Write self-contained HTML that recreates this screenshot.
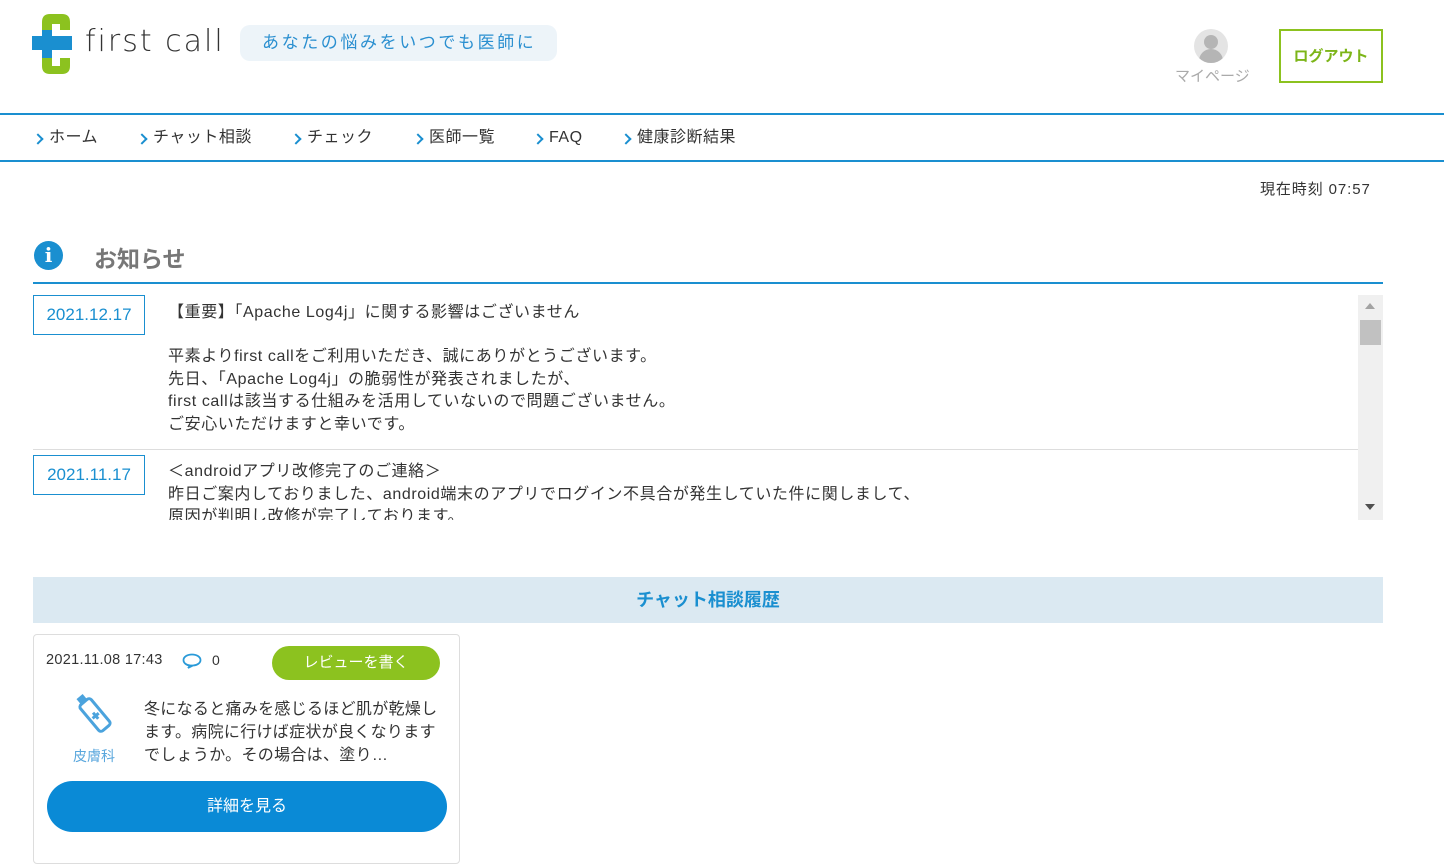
<!DOCTYPE html>
<html><head><meta charset="utf-8"><style>
*{margin:0;padding:0;box-sizing:border-box}
body{width:1444px;height:849px;overflow:hidden;background:#fff;font-family:"Liberation Sans","Noto Sans CJK JP",sans-serif;color:#333;position:relative}
.a{position:absolute}
.nav span{position:absolute;top:127px;height:22px;line-height:22px;font-size:16px;color:#333;white-space:nowrap;letter-spacing:.5px}
.nav span::before{content:"";position:absolute;left:-15px;top:8px;width:6px;height:6px;border-top:2px solid #1a8fd0;border-right:2px solid #1a8fd0;transform:rotate(45deg)}
.date{position:absolute;left:33px;width:112px;height:40px;border:1px solid #1a8fd0;color:#1a8fd0;font-size:17px;text-align:center;line-height:38px}
.txt{position:absolute;left:168px;font-size:16px;line-height:22.5px;color:#333;white-space:nowrap;letter-spacing:.6px}
</style></head><body>
<svg class="a" style="left:32px;top:14px" width="40" height="60" viewBox="0 0 40 60">
<path d="M10 8 Q10 0 18 0 L30 0 Q38 0 38 8 L38 16 L28 16 L28 10 L20 10 L20 52 L28 52 L28 44 L38 44 L38 52 Q38 60 30 60 L18 60 Q10 60 10 52Z" fill="#8cc21f"/>
<rect x="0" y="22" width="40" height="14" fill="#1a8fd0"/>
<rect x="10" y="16" width="10" height="28" fill="#1a8fd0"/>
</svg>
<div class="a" style="left:85px;top:24px;font-size:30px;color:#333;letter-spacing:2px;font-family:'DejaVu Sans',sans-serif;font-weight:300">first call</div>
<div class="a" style="left:240px;top:25px;width:317px;height:36px;background:#edf4f9;border-radius:10px;color:#2a8fd0;font-size:17px;line-height:36px;padding-left:22px;letter-spacing:2.6px">あなたの悩みをいつでも医師に</div>
<div class="a" style="left:1194px;top:29px;width:34px;height:34px;border-radius:50%;background:#e4e4e4;overflow:hidden">
<div class="a" style="left:10px;top:6px;width:14px;height:14px;border-radius:50%;background:#b5b5b5"></div>
<div class="a" style="left:5px;top:20px;width:24px;height:18px;border-radius:12px 12px 0 0;background:#b5b5b5"></div></div>
<div class="a" style="left:1175px;top:65px;font-size:15px;color:#aaa">マイページ</div>
<div class="a" style="left:1279px;top:29px;width:104px;height:54px;border:2px solid #8cc21f;color:#7cb518;font-weight:bold;font-size:15px;text-align:center;line-height:52px">ログアウト</div>
<div class="a" style="left:0;top:113px;width:1444px;height:2px;background:#1a8fd0"></div>
<div class="a" style="left:0;top:160px;width:1444px;height:2px;background:#1a8fd0"></div>
<div class="nav">
<span style="left:49px">ホーム</span><span style="left:153px">チャット相談</span><span style="left:307px">チェック</span><span style="left:429px">医師一覧</span><span style="left:549px">FAQ</span><span style="left:637px">健康診断結果</span>
</div>
<div class="a" style="left:1260px;top:178px;font-size:15px;color:#333;letter-spacing:.9px">現在時刻 07:57</div>
<div class="a" style="left:34px;top:241px;width:29px;height:29px;border-radius:50%;background:#1a8fd0;color:#fff;font:bold 20px 'DejaVu Serif',serif;text-align:center;line-height:29px">i</div>
<div class="a" style="left:94px;top:240px;font-size:23px;font-weight:bold;color:#777">お知らせ</div>
<div class="a" style="left:33px;top:282px;width:1350px;height:2px;background:#1a8fd0"></div>
<div class="a" style="left:33px;top:284px;width:1325px;height:236px;overflow:hidden">
<div class="date" style="top:11px;left:0">2021.12.17</div>
<div class="txt" style="top:18px;left:135px">【重要】「Apache Log4j」に関する影響はございません</div>
<div class="txt" style="top:62px;left:135px">平素よりfirst callをご利用いただき、誠にありがとうございます。<br>先日、「Apache Log4j」の脆弱性が発表されましたが、<br>first callは該当する仕組みを活用していないので問題ございません。<br>ご安心いただけますと幸いです。</div>
<div class="a" style="left:0;top:165px;width:1325px;height:1px;background:#ddd"></div>
<div class="date" style="top:171px;left:0">2021.11.17</div>
<div class="txt" style="top:177px;left:135px">＜androidアプリ改修完了のご連絡＞<br>昨日ご案内しておりました、android端末のアプリでログイン不具合が発生していた件に関しまして、<br>原因が判明し改修が完了しております。</div>
</div>
<div class="a" style="left:1358px;top:295px;width:25px;height:225px;background:#f0f0f0"></div>
<div class="a" style="left:1360px;top:320px;width:21px;height:25px;background:#c1c1c1"></div>
<div class="a" style="left:1365px;top:303px;width:0;height:0;border-left:5px solid transparent;border-right:5px solid transparent;border-bottom:6px solid #a3a3a3"></div>
<div class="a" style="left:1365px;top:504px;width:0;height:0;border-left:5px solid transparent;border-right:5px solid transparent;border-top:6px solid #505050"></div>
<div class="a" style="left:33px;top:577px;width:1350px;height:46px;background:#dbe9f2;color:#1a8fd0;font-weight:bold;font-size:18px;text-align:center;line-height:46px">チャット相談履歴</div>
<div class="a" style="left:33px;top:634px;width:427px;height:230px;border:1px solid #ddd;border-radius:4px">
<div class="a" style="left:12px;top:17px;font-size:14.5px;color:#333;letter-spacing:.3px">2021.11.08 17:43</div>
<svg class="a" style="left:148px;top:18px" width="20" height="16" viewBox="0 0 20 16"><path d="M10 1.5C5 1.5 1.5 4 1.5 7s3 5.5 7 5.5L6 15l5-2.5c4.5-.3 7.5-2.6 7.5-5.5S15 1.5 10 1.5z" fill="none" stroke="#2a9ad8" stroke-width="1.8"/></svg>
<div class="a" style="left:178px;top:17px;font-size:14px;color:#333">0</div>
<div class="a" style="left:238px;top:11px;width:168px;height:34px;border-radius:17px;background:#8cc21f;color:#fff;font-size:15px;text-align:center;line-height:34px">レビューを書く</div>
<svg class="a" style="left:36px;top:55px" width="50" height="50" viewBox="0 0 50 50"><g transform="rotate(-40 25 25)"><rect x="21" y="1" width="8" height="6" fill="#4ba3dd"/><rect x="18" y="8" width="14" height="34" rx="3" fill="none" stroke="#4ba3dd" stroke-width="3"/><path d="M21 26h8M25 22v8" stroke="#4ba3dd" stroke-width="3"/></g></svg>
<div class="a" style="left:39px;top:111px;font-size:14px;color:#5aa7dd">皮膚科</div>
<div class="a" style="left:110px;top:63px;font-size:16px;line-height:23px;color:#333;width:302px;letter-spacing:.3px">冬になると痛みを感じるほど肌が乾燥します。病院に行けば症状が良くなりますでしょうか。その場合は、塗り…</div>
<div class="a" style="left:13px;top:146px;width:400px;height:51px;border-radius:26px;background:#0a8ad6;color:#fff;font-size:16px;text-align:center;line-height:51px">詳細を見る</div>
</div>
</body></html>
